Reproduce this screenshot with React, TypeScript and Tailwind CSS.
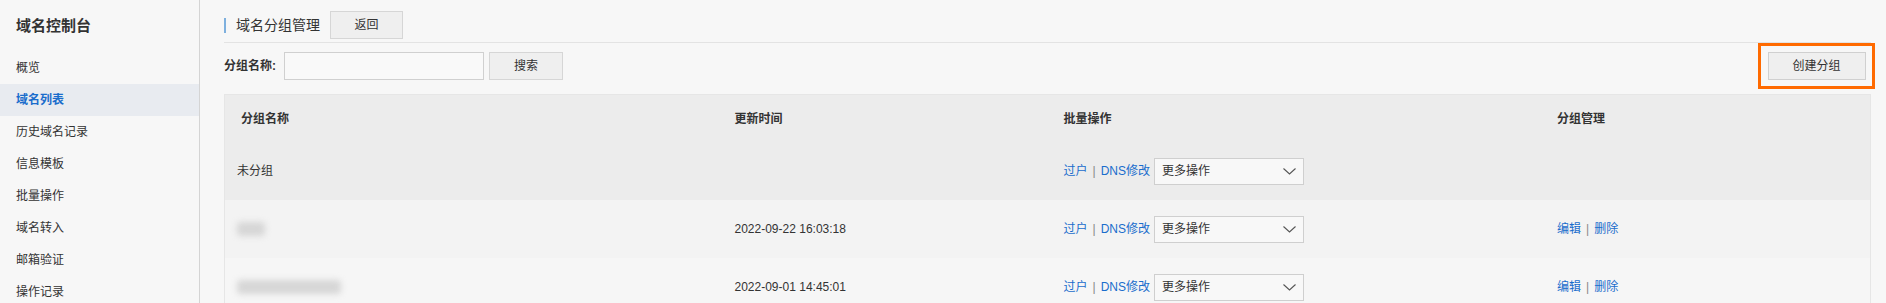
import React from "react";

const FONT = { fontFamily: '"Liberation Sans", Arial, "Noto Sans CJK SC", sans-serif' };

const navItems = ["概览", "域名列表", "历史域名记录", "信息模板", "批量操作", "域名转入", "邮箱验证", "操作记录"];

function Chevron() {
  return (
    <svg width="13" height="7" viewBox="0 0 13 7" fill="none">
      <path d="M0.5 0.5 L6.5 6 L12.5 0.5" stroke="#555" strokeWidth="1.1" />
    </svg>
  );
}

function BatchOps() {
  return (
    <div className="flex items-center text-[12px]">
      <span className="text-[#1a6dcc]">过户</span>
      <span className="text-[#888] mx-[5px]">|</span>
      <span className="text-[#1a6dcc]">DNS修改</span>
      <div className="ml-[4px] w-[150px] h-[27px] border border-[#cfcfcf] bg-[#f8f8f8] flex items-center justify-between pl-[7px] pr-[7px]">
        <span className="text-[#333]">更多操作</span>
        <Chevron />
      </div>
    </div>
  );
}

function Manage() {
  return (
    <div className="flex items-center text-[12px]">
      <span className="text-[#1a6dcc]">编辑</span>
      <span className="text-[#888] mx-[5px]">|</span>
      <span className="text-[#1a6dcc]">删除</span>
    </div>
  );
}

function Blur({ w }: { w: number }) {
  return <div className="h-[14px] bg-[#d6d6d6] blur-[3px] rounded-sm" style={{ width: w }} />;
}

export default function App() {
  const rows = [
    { name: <span>未分组</span>, time: "", bg: "bg-[#ececec]", manage: false },
    { name: <Blur w={28} />, time: "2022-09-22 16:03:18", bg: "bg-[#f3f3f3]", manage: true },
    { name: <Blur w={104} />, time: "2022-09-01 14:45:01", bg: "bg-[#f6f6f6]", manage: true },
  ];
  return (
    <div className="flex h-[303px] w-[1886px] overflow-hidden bg-[#f7f7f7] text-[#333]" style={FONT}>
      <aside className="w-[200px] shrink-0 border-r border-[#d4d4d4] bg-[#f7f7f7]">
        <div className="h-[52px] flex items-center pl-[16px] text-[15px] font-bold text-[#333]">域名控制台</div>
        {navItems.map((t, i) => (
          <div
            key={t}
            className={
              i === 1
                ? "h-[32px] flex items-center pl-[16px] text-[12px] bg-[#e8ebf0] text-[#1a6dcc] font-bold"
                : "h-[32px] flex items-center pl-[16px] text-[12px] text-[#333]"
            }
          >
            {t}
          </div>
        ))}
      </aside>
      <main className="flex-1 min-w-0 pl-[24px] pr-[11px]">
        <div className="pt-[11px] pb-[3px] border-b border-[#e3e3e3] mr-[4px] flex items-center">
          <div className="w-[2px] h-[15px] bg-[#7eb0de]" />
          <span className="ml-[10px] text-[14px] text-[#333]">域名分组管理</span>
          <button className="ml-[10px] w-[73px] h-[28px] border border-[#d6d6d6] bg-[#efefef] text-[12px] text-[#333]">返回</button>
        </div>
        <div className="h-[46px] flex items-center justify-between">
          <div className="flex items-center">
            <span className="text-[12px] font-bold text-[#333] w-[60px]">分组名称:</span>
            <div className="w-[200px] h-[28px] border border-[#d0d0d0] bg-[#f9f9f9]" />
            <button className="ml-[5px] w-[74px] h-[28px] border border-[#d6d6d6] bg-[#efefef] text-[12px] text-[#333]">搜索</button>
          </div>
          <div className="shrink-0 w-[117px] h-[46px] border-[3px] border-[#ff6a00] flex items-center justify-center">
            <button className="shrink-0 w-[98px] h-[28px] border border-[#d0d0d0] bg-[#efefef] text-[12px] text-[#333]">创建分组</button>
          </div>
        </div>
        <div className="mt-[5px] mr-[4px] border border-[#e6e6e6] text-[12px]">
          <div className="grid grid-cols-[30%_20%_30%_20%] h-[47px] items-center bg-[#ececec] font-bold text-[#333]">
            <div className="pl-[16px]">分组名称</div>
            <div className="pl-[16px]">更新时间</div>
            <div className="pl-[16px]">批量操作</div>
            <div className="pl-[16px]">分组管理</div>
          </div>
          {rows.map((r, i) => (
            <div key={i} className={`grid grid-cols-[30%_20%_30%_20%] h-[58px] items-center ${r.bg}`}>
              <div className="pl-[12px] text-[#333]">{r.name}</div>
              <div className="pl-[16px] text-[#333]">{r.time}</div>
              <div className="pl-[16px]"><BatchOps /></div>
              <div className="pl-[16px]">{r.manage ? <Manage /> : null}</div>
            </div>
          ))}
        </div>
      </main>
    </div>
  );
}
